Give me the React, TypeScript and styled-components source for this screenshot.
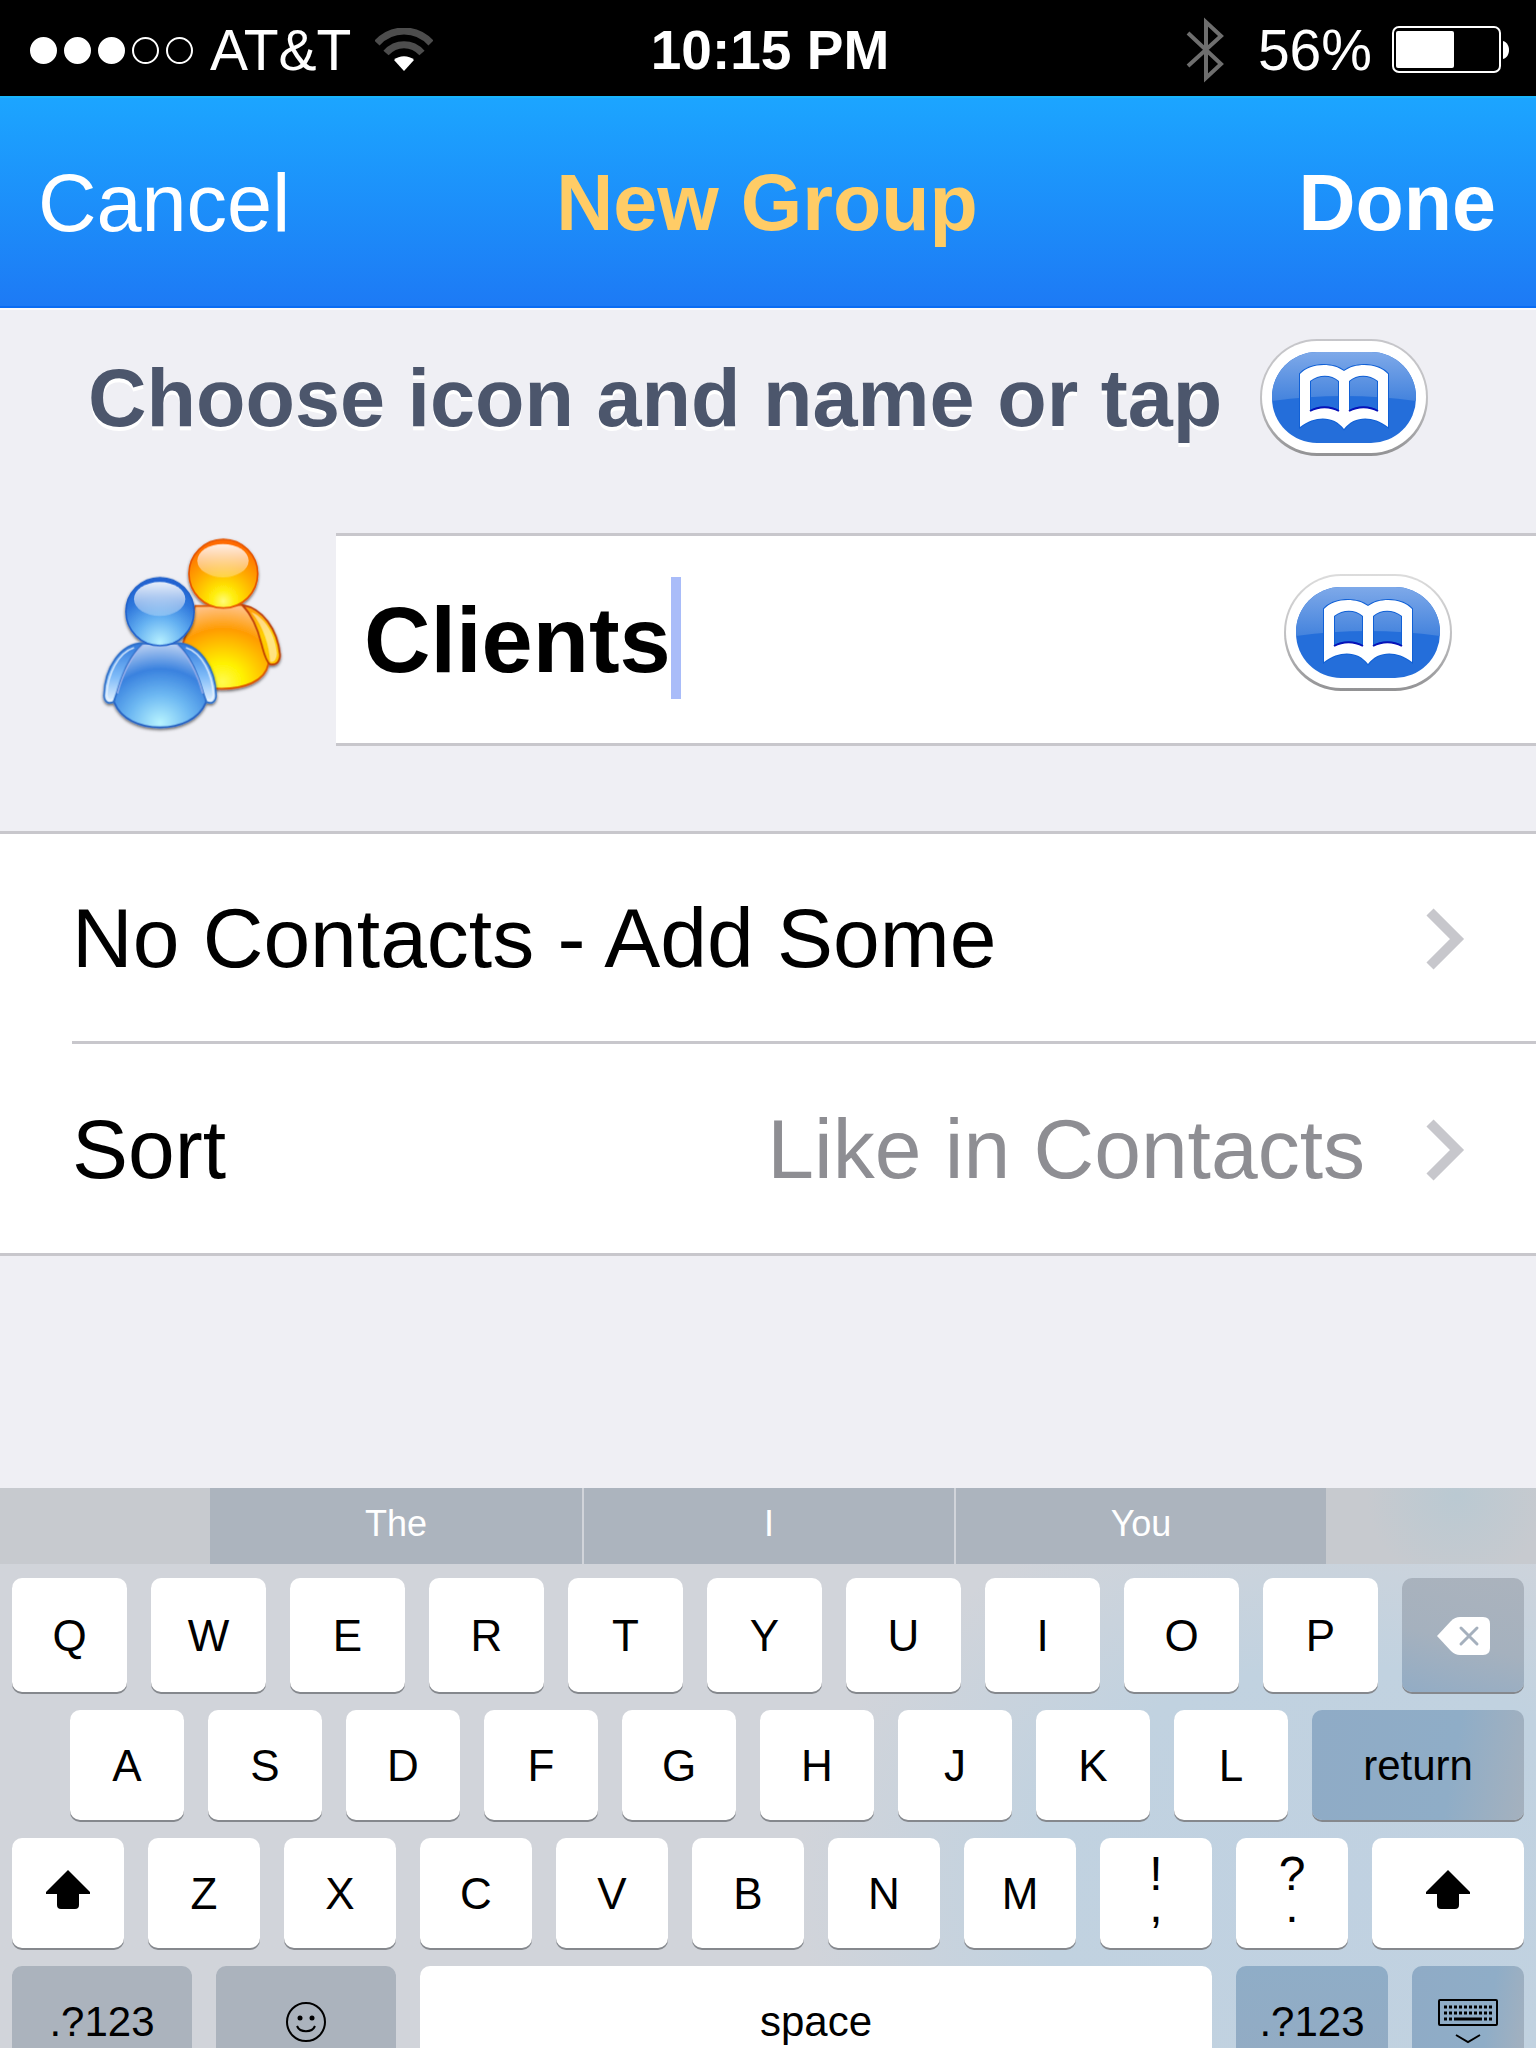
import { useState } from 'react';
import styled, { createGlobalStyle } from 'styled-components';

const TOP_ROW = ['Q', 'W', 'E', 'R', 'T', 'Y', 'U', 'I', 'O', 'P'];
const HOME_ROW = ['A', 'S', 'D', 'F', 'G', 'H', 'J', 'K', 'L'];
const BOTTOM_ROW = ['Z', 'X', 'C', 'V', 'B', 'N', 'M'];
const SUGGESTIONS = ['The', 'I', 'You'];

function WifiIcon() {
  return (
    <svg width="58" height="44" viewBox="0 0 58 44" aria-hidden="true">
      <path d="M2 15C17 -1 41 -1 56 15" fill="none" stroke="#4d4d4d" strokeWidth="7" />
      <path d="M11 25C21 14 37 14 47 25" fill="none" stroke="#4d4d4d" strokeWidth="7" />
      <path d="M19 32C24 27 34 27 39 32L29 43Z" fill="#fff" />
    </svg>
  );
}

function BluetoothIcon() {
  return (
    <svg width="38" height="66" viewBox="0 0 38 66" aria-hidden="true">
      <path
        d="M2 16L35 47L20 61V5L35 19L2 49"
        fill="none"
        stroke="#6e6e6e"
        strokeWidth="4"
      />
    </svg>
  );
}

function BatteryIcon() {
  return (
    <svg width="118" height="48" viewBox="0 0 118 48" aria-hidden="true">
      <rect x="1" y="1" width="107" height="45" rx="6" fill="none" stroke="#fff" strokeWidth="2" />
      <rect x="4" y="5" width="58" height="37" rx="2" fill="#fff" />
      <path d="M111 15C119 17 119 31 111 33Z" fill="#fff" />
    </svg>
  );
}

function BookIcon({ id, ring }: { id: string; ring: string }) {
  return (
    <svg width="168" height="118" viewBox="0 0 168 118" aria-hidden="true">
      <defs>
        <linearGradient id={`${id}-ring`} x1="0" y1="0" x2="0" y2="1">
          <stop offset="0" stopColor={ring} />
          <stop offset="0.5" stopColor="#c2c2c4" />
          <stop offset="1" stopColor="#929294" />
        </linearGradient>
        <linearGradient id={`${id}-gloss`} x1="0" y1="0" x2="0" y2="1">
          <stop offset="0" stopColor="#7ea9e9" />
          <stop offset="1" stopColor="#4483dd" />
        </linearGradient>
        <clipPath id={`${id}-clip`}>
          <rect x="12" y="13" width="144" height="91" rx="45" ry="45" />
        </clipPath>
      </defs>
      <rect x="0" y="0" width="168" height="117" rx="57" ry="58" fill={`url(#${id}-ring)`} />
      <rect x="2" y="2" width="164" height="112" rx="55" ry="56" fill="#fff" />
      <g clipPath={`url(#${id}-clip)`}>
        <rect x="12" y="13" width="144" height="91" fill="#246eda" />
        <path d="M12 13H156V62Q84 52 12 62Z" fill={`url(#${id}-gloss)`} />
      </g>
      <path
        fillRule="evenodd"
        fill="#fff"
        stroke="#1060d6"
        strokeWidth="2"
        paintOrder="stroke"
        d="M40 35C50 24 72 23 84 32C96 23 118 24 128 35V88C112 76 94 77 84 90C74 77 56 76 40 88ZM50 42V72C59 67 70 67 79 72V42C71 35 59 35 50 42ZM89 42V72C98 67 109 67 118 72V42C109 35 97 35 89 42Z"
      />
      <path
        d="M50 72C59 67 70 67 79 72M89 72C98 67 109 67 118 72"
        fill="none"
        stroke="#0711b8"
        strokeWidth="2"
      />
    </svg>
  );
}

function PeopleIcon() {
  return (
    <svg width="190" height="202" viewBox="120 105 570 606" aria-hidden="true">
      <defs>
        <radialGradient id="sunHead" cx="0.5" cy="0.9" r="0.85">
          <stop offset="0" stopColor="#fffb7a" />
          <stop offset="0.2" stopColor="#ffee08" />
          <stop offset="0.6" stopColor="#ffa800" />
          <stop offset="1" stopColor="#ff6a00" />
        </radialGradient>
        <radialGradient id="sunBody" cx="0.5" cy="0.92" r="0.9">
          <stop offset="0" stopColor="#fffb50" />
          <stop offset="0.25" stopColor="#fff200" />
          <stop offset="0.7" stopColor="#ff9c00" />
          <stop offset="1" stopColor="#ffc080" />
        </radialGradient>
        <radialGradient id="skyHead" cx="0.5" cy="0.95" r="0.9">
          <stop offset="0" stopColor="#b6f0ff" />
          <stop offset="0.4" stopColor="#66b2f2" />
          <stop offset="0.75" stopColor="#2f78dc" />
          <stop offset="1" stopColor="#2062d2" />
        </radialGradient>
        <radialGradient id="skyBody" cx="0.5" cy="0.95" r="0.95">
          <stop offset="0" stopColor="#b8f4ff" />
          <stop offset="0.35" stopColor="#6fbaf3" />
          <stop offset="0.68" stopColor="#3a82df" />
          <stop offset="1" stopColor="#b8cff2" />
        </radialGradient>
        <linearGradient id="skyArm" x1="0" y1="0" x2="0" y2="1">
          <stop offset="0" stopColor="#2f78dc" />
          <stop offset="0.55" stopColor="#7dbaf8" />
          <stop offset="1" stopColor="#e4f2ff" />
        </linearGradient>
        <linearGradient id="sunArm" x1="0" y1="0" x2="0" y2="1">
          <stop offset="0" stopColor="#ff9a10" />
          <stop offset="0.5" stopColor="#ffce00" />
          <stop offset="1" stopColor="#ffc400" />
        </linearGradient>
        <linearGradient id="shine" x1="0" y1="0" x2="0" y2="1">
          <stop offset="0" stopColor="#fff" stopOpacity="0.9" />
          <stop offset="1" stopColor="#fff" stopOpacity="0.25" />
        </linearGradient>
        <filter id="drop" x="-20%" y="-20%" width="140%" height="140%">
          <feDropShadow dx="0" dy="5" stdDeviation="5" floodColor="#000" floodOpacity="0.6" />
        </filter>
      </defs>
      <g filter="url(#drop)" strokeWidth="5">
        <path
          d="M405 318H440L545 314C592 362 620 430 625 492C615 545 550 566 485 566C420 566 370 545 350 490Z"
          fill="url(#sunBody)"
          stroke="#dc5200"
        />
        <path
          d="M548 315C607 326 652 386 660 464C660 486 647 496 631 493C617 486 611 455 604 430C594 389 576 347 548 315Z"
          fill="url(#sunArm)"
          stroke="#bd3b08"
        />
        <path
          d="M574 336C615 352 646 405 651 459C650 482 638 489 630 484C628 440 612 380 574 336Z"
          fill="#fff"
          opacity="0.5"
        />
        <circle cx="490" cy="221" r="103" fill="url(#sunHead)" stroke="#e65605" />
        <ellipse cx="489" cy="182" rx="77" ry="50" fill="url(#shine)" />
      </g>
      <g filter="url(#drop)" strokeWidth="5">
        <path
          d="M235 431H365C405 475 434 547 438 606C417 658 360 682 300 682C240 682 183 658 162 606C166 547 195 475 235 431Z"
          fill="url(#skyBody)"
          stroke="#2461c4"
        />
        <path
          d="M250 429C182 429 134 502 132 587C133 607 147 612 160 606C170 586 174 560 186 530C200 492 222 455 250 429Z"
          fill="url(#skyArm)"
          stroke="#2e6fc9"
        />
        <path
          d="M350 429C418 429 466 502 468 587C467 607 453 612 440 606C430 586 426 560 414 530C400 492 378 455 350 429Z"
          fill="url(#skyArm)"
          stroke="#2e6fc9"
        />
        <path
          d="M222 443C175 458 143 520 140 585C143 602 152 604 158 596M378 443C425 458 457 520 460 585C457 602 448 604 442 596"
          fill="none"
          stroke="#e8f4ff"
          opacity="0.8"
        />
        <path
          d="M250 434C210 472 186 530 172 580M350 434C390 472 414 530 428 580"
          fill="none"
          stroke="#a9b8ee"
          opacity="0.8"
        />
        <circle cx="300" cy="335" r="102" fill="url(#skyHead)" stroke="#2464cc" />
        <ellipse cx="299" cy="297" rx="77" ry="51" fill="url(#shine)" />
      </g>
    </svg>
  );
}

function ChevronIcon() {
  return (
    <svg width="40" height="62" viewBox="0 0 40 62" aria-hidden="true">
      <path d="M5 4L32 31L5 58" fill="none" stroke="#c7c7cc" strokeWidth="10" />
    </svg>
  );
}

function ShiftIcon() {
  return (
    <svg width="44" height="48" viewBox="0 0 44 48" aria-hidden="true">
      <path d="M22 0L44 22V24H33V35Q33 39 29 39H15Q11 39 11 35V24H0V22Z" fill="#000" />
    </svg>
  );
}

function BackspaceIcon() {
  return (
    <svg width="54" height="38" viewBox="0 0 54 38" aria-hidden="true">
      <path d="M1 19L15 4Q19 0 24 0H47Q54 0 54 7V31Q54 38 47 38H24Q19 38 15 34Z" fill="#fff" />
      <path d="M25 11L41 27M41 11L25 27" stroke="#a5b0bd" strokeWidth="3" strokeLinecap="round" />
    </svg>
  );
}

function SmileIcon() {
  return (
    <svg width="42" height="42" viewBox="0 0 42 42" aria-hidden="true">
      <circle cx="21" cy="21" r="19" fill="none" stroke="#000" strokeWidth="2" />
      <circle cx="15" cy="17" r="2.5" />
      <circle cx="27" cy="17" r="2.5" />
      <path d="M12 25C15 32 27 32 30 25" fill="none" stroke="#000" strokeWidth="2" />
    </svg>
  );
}

function HideKeyboardIcon() {
  return (
    <svg width="60" height="46" viewBox="0 0 60 46" aria-hidden="true">
      <rect x="1" y="1" width="58" height="25" rx="1" fill="none" stroke="#000" strokeWidth="2" />
      <path d="M6 8H55M6 14H55" stroke="#000" strokeWidth="3" strokeDasharray="3 2" />
      <path d="M6 20H15M46 20H55" stroke="#000" strokeWidth="3" strokeDasharray="3 2" />
      <path d="M16 20H44" stroke="#000" strokeWidth="3" />
      <path d="M18 36L30 43L42 36" fill="none" stroke="#000" strokeWidth="2" />
    </svg>
  );
}

function App() {
  const [name, setName] = useState('Clients');

  return (
    <Screen>
      <GlobalStyle />
      <StatusBar>
        <StatusGroup>
          <SignalDots>
            <Dot $filled />
            <Dot $filled />
            <Dot $filled />
            <Dot />
            <Dot />
          </SignalDots>
          <Carrier>AT&amp;T</Carrier>
          <WifiIcon />
        </StatusGroup>
        <Clock>10:15 PM</Clock>
        <StatusGroup $end>
          <BluetoothIcon />
          <Percent>56%</Percent>
          <BatteryIcon />
        </StatusGroup>
      </StatusBar>

      <NavBar>
        <NavButton type="button">Cancel</NavButton>
        <Title>New Group</Title>
        <NavButton type="button" $strong>
          Done
        </NavButton>
      </NavBar>

      <Form>
        <HintRow>
          <Hint htmlFor="group-name">Choose icon and name or tap</Hint>
          <BookButton type="button" aria-label="Pick from address book">
            <BookIcon id="hint-book" ring="#c6c6ca" />
          </BookButton>
        </HintRow>

        <NameRow>
          <GroupIconButton type="button" aria-label="Choose icon">
            <PeopleIcon />
          </GroupIconButton>
          <NamePanel>
            <NameField>
              <NameInput
                id="group-name"
                value={name}
                size={name.length || 1}
                onChange={(e) => setName(e.target.value)}
              />
              <Caret />
            </NameField>
            <BookButton type="button" aria-label="Insert name from address book">
              <BookIcon id="name-book" ring="#dcdcdc" />
            </BookButton>
          </NamePanel>
        </NameRow>

        <Options>
          <OptionRow type="button">
            <OptionLabel>No Contacts - Add Some</OptionLabel>
            <ChevronIcon />
          </OptionRow>
          <OptionRow type="button">
            <OptionLabel>Sort</OptionLabel>
            <OptionValue>Like in Contacts</OptionValue>
            <ChevronIcon />
          </OptionRow>
        </Options>
      </Form>

      <Keyboard>
        <SuggestionBar>
          <SuggestionEdge />
          {SUGGESTIONS.map((word) => (
            <Suggestion type="button" key={word}>
              {word}
            </Suggestion>
          ))}
          <SuggestionEdge $tinted />
        </SuggestionBar>
        <Keys>
          <KeyRow $height={114}>
            {TOP_ROW.map((letter) => (
              <Key type="button" key={letter}>
                {letter}
              </Key>
            ))}
            <Key type="button" $width={122} $tone="fade" aria-label="Delete">
              <BackspaceIcon />
            </Key>
          </KeyRow>
          <KeyRow $height={110} $indent>
            {HOME_ROW.map((letter) => (
              <Key type="button" key={letter}>
                {letter}
              </Key>
            ))}
            <Key type="button" $width={212} $tone="blue" $word>
              return
            </Key>
          </KeyRow>
          <KeyRow $height={110}>
            <Key type="button" aria-label="Shift">
              <ShiftIcon />
            </Key>
            {BOTTOM_ROW.map((letter) => (
              <Key type="button" key={letter}>
                {letter}
              </Key>
            ))}
            <PunctuationKey type="button">{'!\n,'}</PunctuationKey>
            <PunctuationKey type="button">{'?\n.'}</PunctuationKey>
            <Key type="button" $width={152} aria-label="Shift">
              <ShiftIcon />
            </Key>
          </KeyRow>
          <KeyRow $height={110}>
            <Key type="button" $width={180} $tone="gray" $word>
              .?123
            </Key>
            <Key type="button" $width={180} $tone="gray" aria-label="Emoji">
              <SmileIcon />
            </Key>
            <Key type="button" $word>
              space
            </Key>
            <Key type="button" $width={152} $tone="steel" $word>
              .?123
            </Key>
            <Key type="button" $width={112} $tone="blue" aria-label="Hide keyboard">
              <HideKeyboardIcon />
            </Key>
          </KeyRow>
        </Keys>
      </Keyboard>
    </Screen>
  );
}

const GlobalStyle = createGlobalStyle`
  * {
    box-sizing: border-box;
  }

  body {
    margin: 0;
    background-color: #efeff4;
    font-family: 'Liberation Sans', Arial, sans-serif;
  }

  button,
  input {
    margin: 0;
    padding: 0;
    border: 0;
    border-radius: 0;
    background: none;
    color: inherit;
    font: inherit;
  }

  svg {
    display: block;
    flex-shrink: 0;
  }
`;

const Screen = styled.div`
  display: flex;
  flex-direction: column;
  height: 100vh;
  overflow: hidden;

  background-color: #efeff4;
  color: #000;
`;

const StatusBar = styled.header`
  display: grid;
  grid-template-columns: 1fr auto 1fr;
  align-items: center;
  flex-shrink: 0;
  height: 96px;
  padding: 4px 26px 0 30px;

  background-color: #000;
  color: #fff;
  font-size: 57px;
  line-height: 64px;
`;

const StatusGroup = styled.div<{ $end?: boolean }>`
  display: flex;
  align-items: center;
  justify-content: ${({ $end }) => ($end ? 'flex-end' : 'flex-start')};
`;

const SignalDots = styled.div`
  display: flex;
  gap: 7px;
`;

const Dot = styled.span<{ $filled?: boolean }>`
  width: 27px;
  height: 27px;

  border: 2px solid #fff;
  border-radius: 50%;
  background-color: ${({ $filled }) => ($filled ? '#fff' : 'transparent')};
`;

const Carrier = styled.span`
  margin: 0 24px 0 17px;
`;

const Clock = styled.time`
  font-size: 55px;
  font-weight: 700;
`;

const Percent = styled.span`
  margin: 0 20px 0 34px;
`;

const NavBar = styled.nav`
  display: grid;
  grid-template-columns: 1fr auto 1fr;
  align-items: center;
  flex-shrink: 0;
  height: 212px;
  padding: 2px 40px 0 38px;

  border-top: 2px solid #19b4fc;
  border-bottom: 2px solid #0a6cf3;
  background-image: linear-gradient(#1ca5ff, #1d7af5);
  color: #fff;
  font-size: 81px;
  line-height: 96px;
`;

const NavButton = styled.button<{ $strong?: boolean }>`
  justify-self: ${({ $strong }) => ($strong ? 'end' : 'start')};

  font-size: ${({ $strong }) => ($strong ? 79 : 81)}px;
  font-weight: ${({ $strong }) => ($strong ? 700 : 400)};
`;

const Title = styled.h1`
  margin: 0;

  color: #ffcc66;
  font-size: 79px;
  font-weight: 700;
`;

const Form = styled.main`
  flex-shrink: 0;
  padding-bottom: 232px;

  border-top: 2px solid #fafafc;
`;

const HintRow = styled.div`
  display: flex;
  align-items: center;
  justify-content: space-between;
  height: 176px;
  padding: 0 108px 0 88px;
`;

const Hint = styled.label`
  color: #4c566c;
  font-size: 81px;
  font-weight: 700;
  line-height: 96px;
  text-shadow: 0 4px 0 #fff;
`;

const BookButton = styled.button`
  flex-shrink: 0;
`;

const NameRow = styled.div`
  display: grid;
  grid-template-columns: 336px 1fr;
  margin-top: 47px;
`;

const GroupIconButton = styled.button`
  display: flex;
  align-items: flex-start;
  padding: 2px 0 0 100px;
`;

const NamePanel = styled.div`
  display: flex;
  align-items: flex-start;
  justify-content: space-between;
  height: 213px;
  padding: 38px 84px 0 28px;

  border: solid #c8c7cc;
  border-width: 3px 0;
  background-color: #fff;
`;

const NameField = styled.div`
  display: flex;
  align-items: center;
  padding-top: 3px;
`;

const NameInput = styled.input`
  field-sizing: content;
  height: 122px;
  padding-top: 4px;

  outline: none;
  font-size: 92px;
  font-weight: 700;
`;

const Caret = styled.span`
  width: 10px;
  height: 122px;

  background-color: #a9bcf9;
`;

const Options = styled.section`
  margin-top: 85px;
  padding-left: 72px;

  border: solid #c8c7cc;
  border-width: 3px 0;
  background-color: #fff;
`;

const OptionRow = styled.button`
  display: flex;
  align-items: center;
  width: 100%;
  height: 207px;
  padding: 2px 71px 0 0;

  font-size: 84px;
  text-align: left;

  & + & {
    height: 212px;
    border-top: 3px solid #c8c7cc;
  }
`;

const OptionLabel = styled.span`
  flex: 1;
`;

const OptionValue = styled.span`
  margin-right: 60px;

  color: #8e8e93;
`;

const Keyboard = styled.section`
  flex-shrink: 0;

  background-color: #d1d4da;
  background-image: radial-gradient(
    ellipse 540px 400px at 87% 66%,
    #c0d1e1 0%,
    #c1d2e0 55%,
    rgba(209, 212, 218, 0) 100%
  );
`;

const SuggestionBar = styled.div`
  display: grid;
  grid-template-columns: 210px 1fr 1fr 1fr 210px;
  height: 76px;
`;

const SuggestionEdge = styled.div<{ $tinted?: boolean }>`
  background-color: #c7cacf;
  background-image: ${({ $tinted }) =>
    $tinted ? 'radial-gradient(circle 90px at 62% 10%, #bac9d2, #c7cacf)' : 'none'};
`;

const Suggestion = styled.button`
  padding-bottom: 4px;

  background-color: #acb4be;
  color: #fff;
  font-size: 36px;

  & + & {
    border-left: 2px solid #d1d4da;
  }
`;

const Keys = styled.div`
  display: flex;
  flex-direction: column;
  gap: 18px;
  padding: 14px 12px;
`;

const KeyRow = styled.div<{ $height: number; $indent?: boolean }>`
  display: flex;
  gap: 24px;
  height: ${({ $height }) => $height}px;
  padding-left: ${({ $indent }) => ($indent ? '58px' : '0')};
`;

const tones = {
  white: '#fff',
  gray: '#abb3bd',
  steel: 'linear-gradient(#8fadc7, #93abc3)',
  blue: 'linear-gradient(100deg, #8fabc6 0%, #8fadc7 65%, #a5b1be 100%)',
  fade: 'linear-gradient(15deg, #92acc5 0%, #a5b1be 45%, #abb3bd 100%)',
};

const Key = styled.button<{
  $width?: number;
  $tone?: keyof typeof tones;
  $word?: boolean;
}>`
  display: flex;
  flex: ${({ $width }) => ($width ? `0 0 ${$width}px` : '1 1 0')};
  align-items: center;
  justify-content: center;
  padding-top: 2px;

  border-radius: 10px;
  background: ${({ $tone = 'white' }) => tones[$tone]};
  box-shadow: 0 2px 0 #85888d;
  font-size: ${({ $word }) => ($word ? 42 : 44)}px;
`;

const PunctuationKey = styled(Key)`
  padding: 0 0 6px;

  font-size: 48px;
  line-height: 32px;
  white-space: pre-line;
`;

export default App;
